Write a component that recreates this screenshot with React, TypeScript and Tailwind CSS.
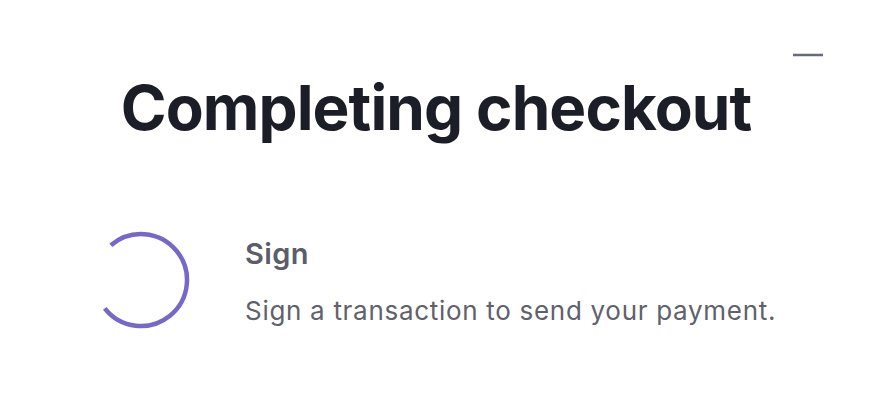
const Spinner = () => {
  // arc with a gap on the left side
  const r = 46;
  const cx = 50;
  const cy = 50;
  const start = (-131 * Math.PI) / 180;
  const end = (142 * Math.PI) / 180;
  const x1 = cx + r * Math.cos(start);
  const y1 = cy + r * Math.sin(start);
  const x2 = cx + r * Math.cos(end);
  const y2 = cy + r * Math.sin(end);
  return (
    <svg width="100" height="100" viewBox="0 0 100 100" className="shrink-0">
      <path
        d={`M ${x1} ${y1} A ${r} ${r} 0 1 1 ${x2} ${y2}`}
        fill="none"
        stroke="#7468c9"
        strokeWidth="4.5"
      />
    </svg>
  );
};

const MinimizeIcon = () => (
  <svg width="30" height="4" viewBox="0 0 30 4">
    <line x1="0" y1="2" x2="30" y2="2" stroke="#676a74" strokeWidth="2.5" />
  </svg>
);

export default function App() {
  return (
    <div
      className="w-[870px] h-[412px] bg-white flex flex-col"
      style={{ fontFamily: "Inter, 'Noto Sans', sans-serif" }}
    >
      <div className="flex justify-end pt-[53px] pr-[47px] h-[77px]">
        <MinimizeIcon />
      </div>
      <h1 className="text-center text-[62px] font-bold leading-none tracking-[-0.9px] text-[#1b1d27] pl-[2px]">
        Completing checkout
      </h1>
      <div className="flex items-center mt-[91px] pl-[91px]">
        <Spinner />
        <div className="flex flex-col ml-[54px] pt-[2px]">
          <p className="text-[29px] font-semibold tracking-[0.4px] text-[#5b5d69] leading-none">Sign</p>
          <p className="text-[26px] tracking-[0.7px] text-[#5f616c] leading-none mt-[30px]">
            Sign a transaction to send your payment.
          </p>
        </div>
      </div>
    </div>
  );
}
